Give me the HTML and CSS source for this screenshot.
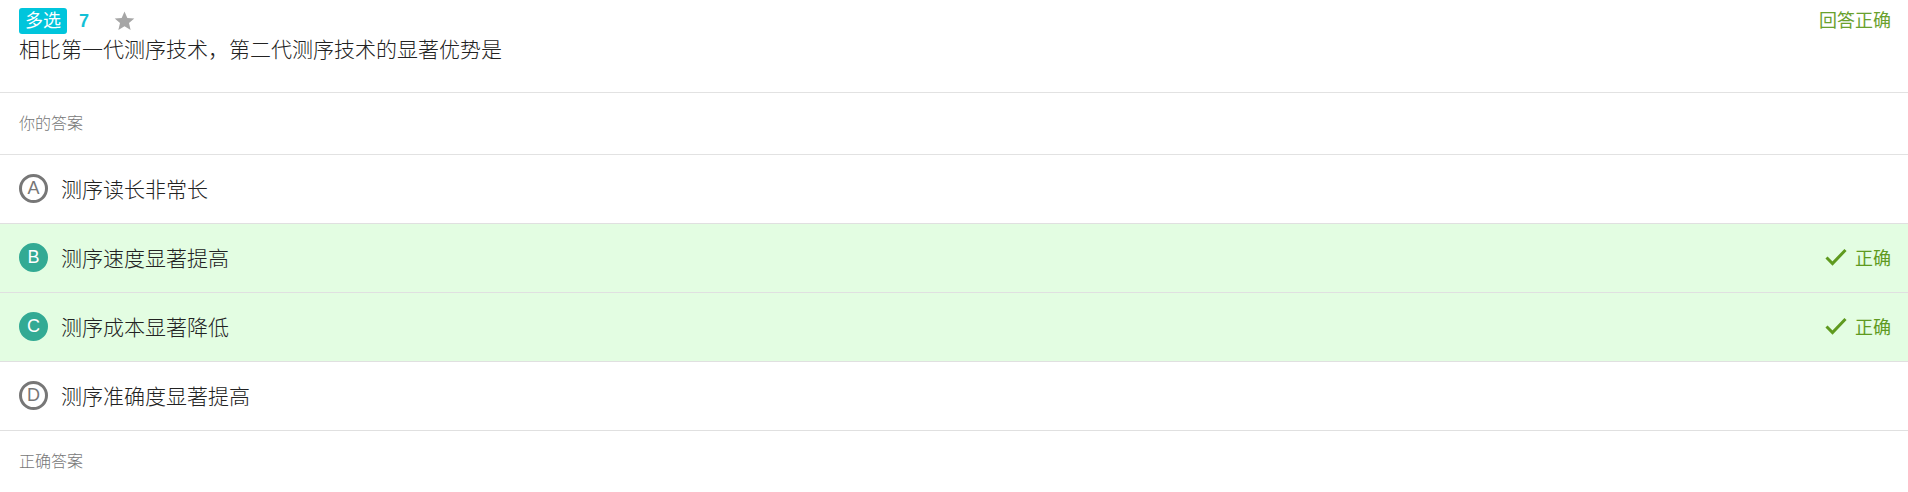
FILE: index.html
```html
<!DOCTYPE html>
<html lang="zh-CN">
<head>
<meta charset="utf-8">
<title>多选题</title>
<link rel="stylesheet" href="styles.css">
</head>
<body>
<div class="question">
  <div class="q-head">
    <div class="q-meta">
      <div class="meta-left">
        <span class="badge">多选</span>
        <span class="q-num">7</span>
        <svg class="star" viewBox="0 0 24 24" width="23" height="22"><path d="M12 1.5l3.1 7.1 7.6.7-5.8 5 1.8 7.5L12 17.8l-6.7 4 1.8-7.5-5.8-5 7.6-.7z" fill="#a6a6a6"/></svg>
      </div>
      <span class="status">回答正确</span>
    </div>
    <div class="q-title">相比第一代测序技术，第二代测序技术的显著优势是</div>
  </div>
  <div class="section-label">你的答案</div>
  <ul class="options">
    <li class="option">
      <span class="letter">A</span>
      <span class="opt-text">测序读长非常长</span>
    </li>
    <li class="option correct">
      <span class="letter">B</span>
      <span class="opt-text">测序速度显著提高</span>
      <span class="mark"><svg viewBox="0 0 22 18" width="22" height="18"><path d="M1.5 9.5l6 6L20.5 2" fill="none" stroke="#5f9a1f" stroke-width="3"/></svg>正确</span>
    </li>
    <li class="option correct">
      <span class="letter">C</span>
      <span class="opt-text">测序成本显著降低</span>
      <span class="mark"><svg viewBox="0 0 22 18" width="22" height="18"><path d="M1.5 9.5l6 6L20.5 2" fill="none" stroke="#5f9a1f" stroke-width="3"/></svg>正确</span>
    </li>
    <li class="option">
      <span class="letter">D</span>
      <span class="opt-text">测序准确度显著提高</span>
    </li>
  </ul>
  <div class="section-label">正确答案</div>
</div>
</body>
</html>
```
FILE: styles.css
```css
* { box-sizing: border-box; }
html, body {
  margin: 0;
  padding: 0;
  background: #fff;
}
body {
  font-family: "Liberation Sans", "Noto Sans CJK SC", sans-serif;
  color: #333;
}
.q-head {
  padding: 8px 17px 27px 19px;
  border-bottom: 1px solid #e2e2e2;
}
.q-meta {
  display: flex;
  justify-content: space-between;
  align-items: center;
  height: 26px;
}
.meta-left {
  display: flex;
  align-items: center;
}
.badge {
  display: inline-block;
  height: 26px;
  line-height: 26px;
  padding: 0 6px;
  background: #00c5dc;
  color: #fff;
  font-size: 18px;
  border-radius: 3px;
}
.q-num {
  margin-left: 12px;
  color: #14c0d6;
  font-size: 18px;
  font-weight: bold;
  line-height: 26px;
}
.star {
  margin-left: 24px;
  display: block;
}
.status {
  color: #6aa12d;
  font-size: 18px;
  line-height: 26px;
}
.q-title {
  margin-top: 1px;
  font-size: 21px;
  line-height: 30px;
  color: #222;
  font-weight: 300;
}
.section-label {
  height: 62px;
  display: flex;
  align-items: center;
  padding-left: 19px;
  padding-bottom: 3px;
  font-size: 16px;
  color: #777;
  font-weight: 300;
  border-bottom: 1px solid #e2e2e2;
}
.options {
  list-style: none;
  margin: 0;
  padding: 0;
}
.option {
  height: 69px;
  display: flex;
  align-items: center;
  padding: 0 17px 2px 19px;
  border-bottom: 1px solid #e0e0e0;
}
.option.correct {
  background: #e3fde2;
}
.letter {
  width: 29px;
  height: 29px;
  flex: none;
  border-radius: 50%;
  border: 3px solid #777;
  color: #777;
  font-size: 18px;
  display: flex;
  align-items: center;
  justify-content: center;
}
.correct .letter {
  border-color: #33aa94;
  background: #33aa94;
  color: #fff;
}
.opt-text {
  margin-left: 13px;
  font-size: 21px;
  color: #222;
  font-weight: 300;
  margin-top: -1px;
}
.mark {
  margin-left: auto;
  display: flex;
  align-items: center;
  color: #5f9a1f;
  font-size: 18px;
}
.mark svg {
  margin-right: 8px;
}
```
